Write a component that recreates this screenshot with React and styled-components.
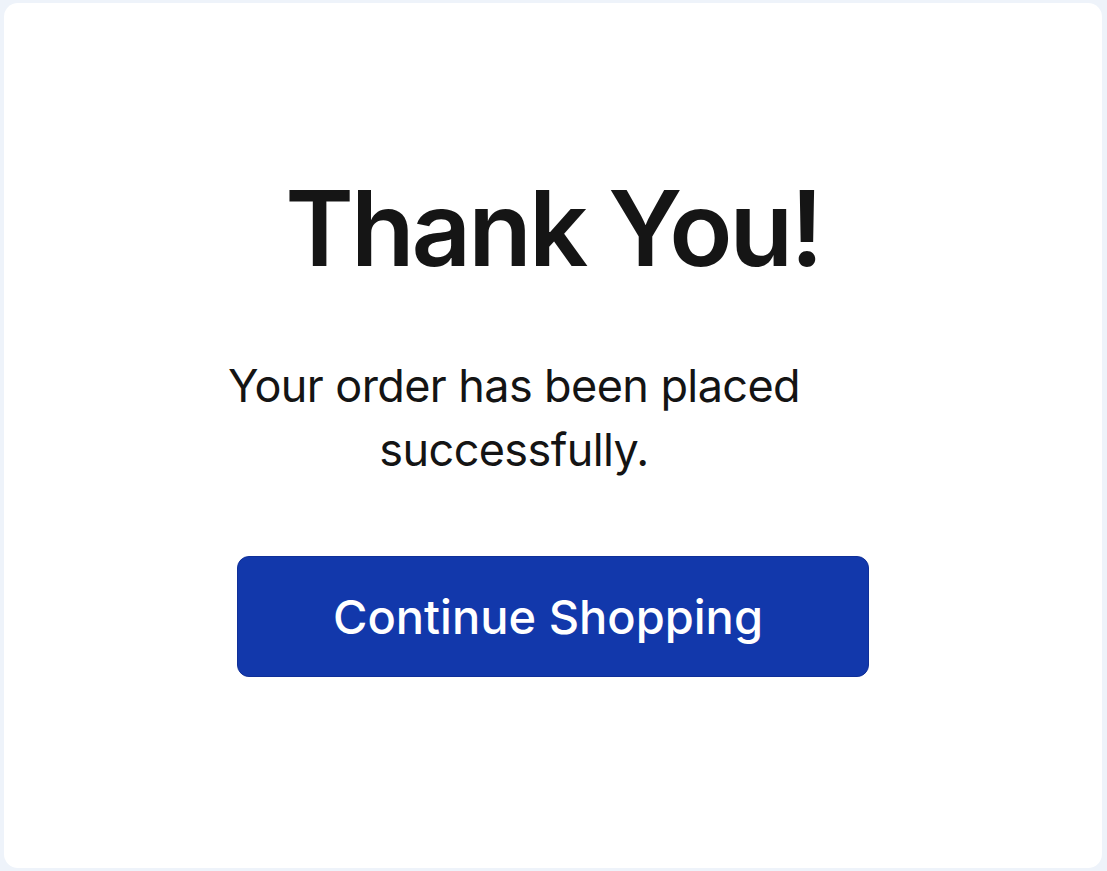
import React from 'react';
import styled, { createGlobalStyle } from 'styled-components'

const GlobalStyle = createGlobalStyle`
  html, body {
    margin: 0;
    padding: 0;
    background: #eef3fa;
  }
  body {
    font-family: Inter, "Noto Sans", "Liberation Sans", sans-serif;
  }
`

// * ----------- STYLE ---------- *
const Page = styled.main`
  box-sizing: border-box;
  width: 1107px;
  height: 871px;
  padding: 3px 5px 3px 4px;
`
const Card = styled.section`
  box-sizing: border-box;
  height: 100%;
  background: #ffffff;
  border-radius: 14px;
  display: flex;
  flex-direction: column;
  align-items: center;
  padding-top: 160px;
`
const Title = styled.h1`
  margin: 0;
  font-size: 104px;
  font-weight: 600;
  line-height: 130px;
  color: #151515;
  letter-spacing: -3px;
`
const Message = styled.p`
  margin: 61px 78px 0 0;
  width: 600px;
  text-align: center;
  font-size: 45px;
  line-height: 64px;
  color: #141414;
  letter-spacing: -0.6px;
`
const ShopButton = styled.button`
  margin-top: 74px;
  width: 632px;
  height: 121px;
  padding: 0 10px 0 0;
  background: #1238ab;
  border: 1px solid #0f2f98;
  border-radius: 12px;
  color: #ffffff;
  font-family: inherit;
  font-size: 47px;
  font-weight: 500;
  cursor: pointer;
`

const App = () => {
    return (
        <Page>
            <GlobalStyle />
            <Card>
                <Title>Thank You!</Title>
                <Message>Your order has been placed successfully.</Message>
                <ShopButton>Continue Shopping</ShopButton>
            </Card>
        </Page>
    );
};

export default App;
